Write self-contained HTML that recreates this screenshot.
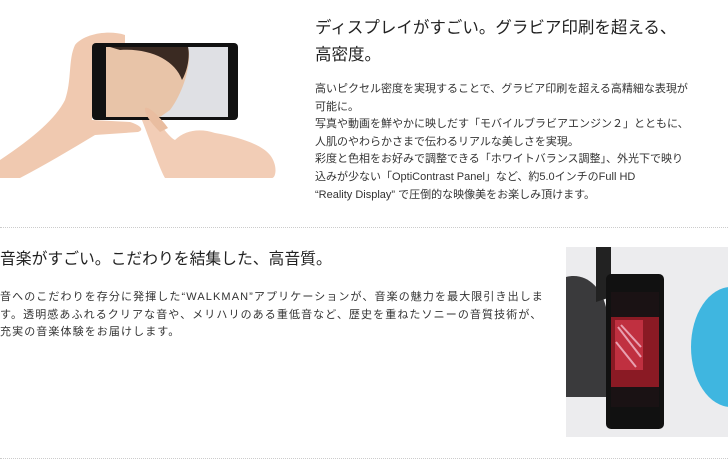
<!DOCTYPE html>
<html><head><meta charset="utf-8"><style>
body{margin:0;width:728px;height:474px;background:#fff;position:relative;overflow:hidden;font-family:"Liberation Sans","Noto Sans CJK JP",sans-serif;color:#333}
.a{position:absolute}
h2{margin:0;font-weight:normal;font-size:16.5px;line-height:27px;color:#222}
p{margin:0;font-size:11px;line-height:17.6px;color:#333}
.hr{position:absolute;left:0;width:728px;border-top:1px dotted #ccc}
</style></head><body>
<svg class="a" style="left:0;top:0" width="290" height="185">
<path d="M0 160 C30 140 55 120 65 100 C72 80 68 60 75 45 C85 33 110 30 125 35 L125 45 L95 50 L92 120 L130 122 C140 125 145 130 138 132 L95 135 C70 150 45 165 20 178 L0 178Z" fill="#f0c9b0"/>
<path d="M145 110 C155 112 165 135 175 140 C185 130 200 128 215 133 C240 137 262 145 270 155 C278 165 276 178 272 178 L165 178 C160 170 150 140 140 115Z" fill="#f2cdb6"/>
<rect x="92" y="43" width="146" height="77" rx="4" fill="#111"/>
<rect x="106" y="47" width="122" height="70" fill="#dfe0e4"/>
<path d="M106 47 L188 47 C192 60 185 90 170 110 L160 117 L106 117Z" fill="#e8c4a8"/>
<path d="M110 47 L188 47 C190 55 188 70 182 80 C175 60 150 48 120 50Z" fill="#3a2a22"/>
<path d="M145 108 C150 106 162 120 168 128 L160 132 C152 124 144 114 145 108Z" fill="#e9bda0"/>
</svg>
<div class="a" style="left:315px;top:15px"><h2>ディスプレイがすごい。グラビア印刷を超える、<br>高密度。</h2></div>
<div class="a" style="left:315px;top:81px;width:410px"><p>高いピクセル密度を実現することで、グラビア印刷を超える高精細な表現が<br>可能に。<br>写真や動画を鮮やかに映しだす「モバイルブラビアエンジン２」とともに、<br>人肌のやわらかさまで伝わるリアルな美しさを実現。<br>彩度と色相をお好みで調整できる「ホワイトバランス調整」、外光下で映り<br>込みが少ない「OptiContrast Panel」など、約5.0インチのFull HD<br>“Reality Display” で圧倒的な映像美をお楽しみ頂けます。</p></div>
<div class="hr" style="top:227px"></div>
<div class="a" style="left:0;top:246px"><h2 style="font-size:15.8px">音楽がすごい。こだわりを結集した、高音質。</h2></div>
<div class="a" style="left:0;top:289px;width:570px"><p style="letter-spacing:1.1px">音へのこだわりを存分に発揮した“WALKMAN”アプリケーションが、音楽の魅力を最大限引き出しま<br>す。透明感あふれるクリアな音や、メリハリのある重低音など、歴史を重ねたソニーの音質技術が、<br>充実の音楽体験をお届けします。</p></div>
<svg class="a" style="left:566px;top:247px" width="162" height="190">
<rect width="162" height="190" fill="#ececee"/>
<path d="M0 30 C20 25 35 40 40 60 L40 150 L0 150Z" fill="#3a3a3c"/>
<path d="M30 0 L45 0 L45 50 L30 55Z" fill="#222"/>
<ellipse cx="165" cy="100" rx="40" ry="60" fill="#3fb6e0"/>
<rect x="40" y="27" width="58" height="155" rx="5" fill="#111"/>
<rect x="45" y="45" width="48" height="115" fill="#1a1214"/>
<rect x="45" y="70" width="48" height="70" fill="#8a1a24"/>
<rect x="49" y="73" width="28" height="50" fill="#c03040"/>
<path d="M52 80 L75 110 M55 78 L75 100 M50 95 L70 120" stroke="#e8a0b0" stroke-width="2"/>
</svg>
<div class="hr" style="top:458px"></div>
</body></html>
